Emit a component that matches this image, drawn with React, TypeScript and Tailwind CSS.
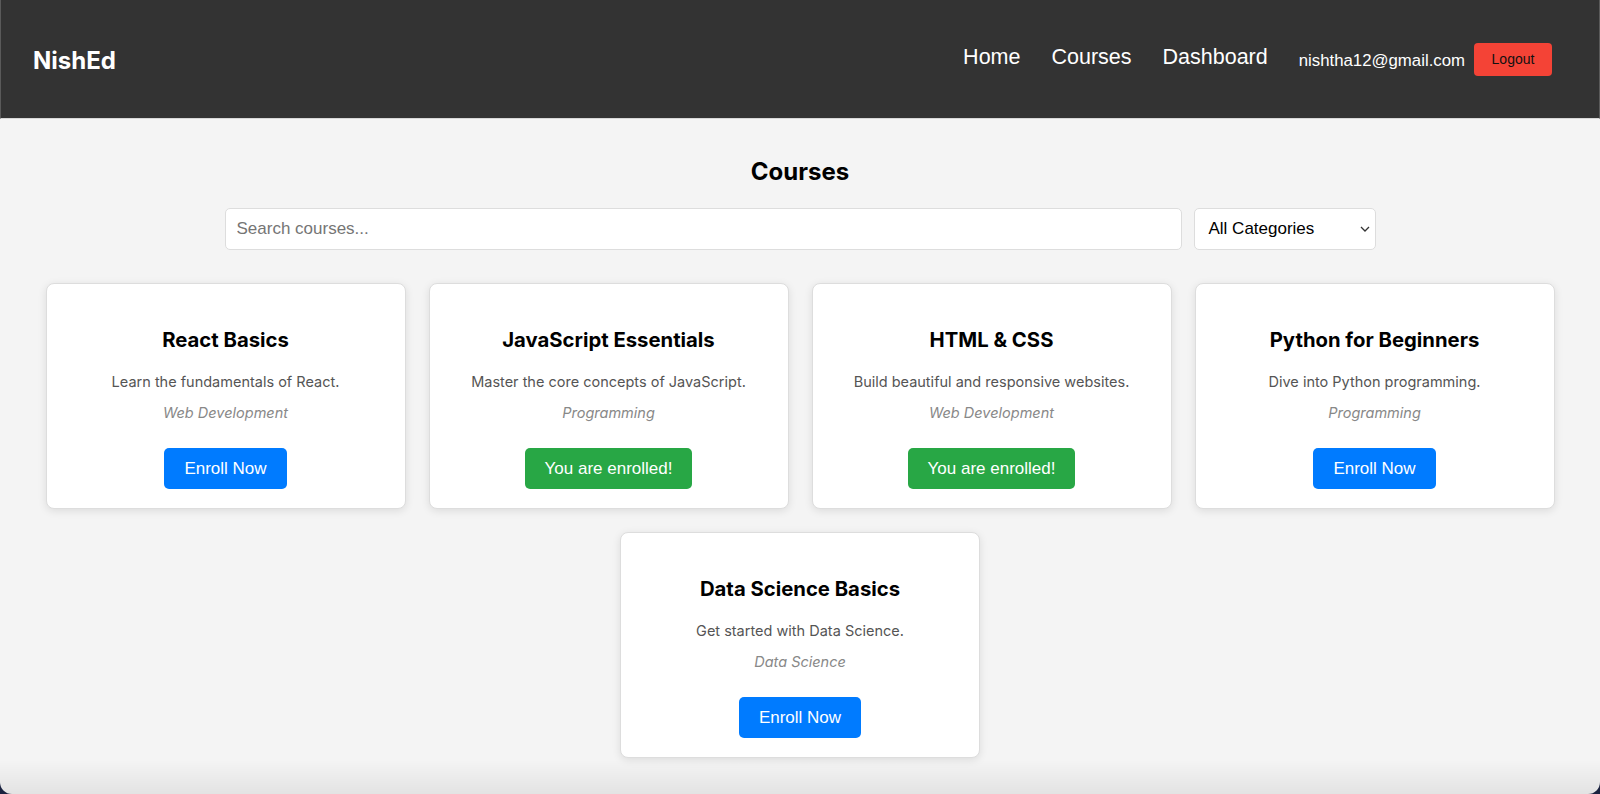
import React from "react";

const courses = [
  { title: "React Basics", desc: "Learn the fundamentals of React.", cat: "Web Development", enrolled: false },
  { title: "JavaScript Essentials", desc: "Master the core concepts of JavaScript.", cat: "Programming", enrolled: true },
  { title: "HTML & CSS", desc: "Build beautiful and responsive websites.", cat: "Web Development", enrolled: true },
  { title: "Python for Beginners", desc: "Dive into Python programming.", cat: "Programming", enrolled: false },
  { title: "Data Science Basics", desc: "Get started with Data Science.", cat: "Data Science", enrolled: false },
];

function Card({ c }: { c: (typeof courses)[number] }) {
  return (
    <div className="w-[360px] h-[226px] bg-white border border-[#dddddd] rounded-lg shadow-[0_2px_8px_rgba(0,0,0,0.1)] flex flex-col items-center pt-[44px] font-['Inter','Noto_Sans',sans-serif]">
      <h3 className="text-[20.3px] leading-[24px] font-bold text-black">{c.title}</h3>
      <p className="mt-[20px] text-[14.5px] leading-[20px] text-[#555555]">{c.desc}</p>
      <p className="mt-[11px] text-[14.5px] leading-[20px] italic text-[#888888]">{c.cat}</p>
      <button
        className={
          c.enrolled
            ? "mt-[25px] h-[41px] px-5 rounded-[5px] text-white text-[17px] bg-[#28a745] font-['Liberation_Sans',Arial,sans-serif]"
            : "mt-[25px] h-[41px] px-5 rounded-[5px] text-white text-[17px] bg-[#007bff] font-['Liberation_Sans',Arial,sans-serif]"
        }
      >
        {c.enrolled ? "You are enrolled!" : "Enroll Now"}
      </button>
    </div>
  );
}

export default function App() {
  return (
    <div className="w-[1600px] h-[794px] bg-[#1b2340] overflow-hidden">
      <div className="relative w-full h-full bg-[#f4f4f4] rounded-b-[12px] overflow-hidden flex flex-col">
        <header className="h-[119px] shrink-0 bg-[#333333] border-l border-r border-[#5a5a5a] border-b border-b-[#d8d8d8] flex items-center pl-[32px] pr-[47px]">
          <div className="pt-[4px] text-[24px] font-bold text-white font-['Inter','Noto_Sans',sans-serif]">NishEd</div>
          <div className="ml-auto flex items-center font-['Liberation_Sans',Arial,sans-serif]">
            <nav className="flex items-center gap-[31px] pb-[4px] text-white text-[21.5px]">
              <span>Home</span>
              <span>Courses</span>
              <span>Dashboard</span>
            </nav>
            <span className="ml-[31px] pt-[4px] text-white text-[16.8px]">nishtha12@gmail.com</span>
            <button className="ml-[9px] w-[78px] h-[33px] bg-[#f44336] rounded-[4px] text-[#111111] text-[14px] flex items-center justify-center">
              Logout
            </button>
          </div>
        </header>
        <main className="flex flex-col items-center">
          <h2 className="mt-[38px] text-[24px] leading-[30px] font-bold text-black font-['Inter','Noto_Sans',sans-serif]">Courses</h2>
          <div className="mt-[21px] flex gap-[12px] font-['Liberation_Sans',Arial,sans-serif]">
            <input
              className="w-[957px] h-[42px] bg-white border border-[#dddddd] rounded-[5px] px-[11px] text-[17px] placeholder:text-[#757575] outline-none"
              placeholder="Search courses..."
            />
            <div className="relative w-[182px] h-[42px] bg-white border border-[#dddddd] rounded-[5px] flex items-center pl-[14px] text-[17px] text-black">
              All Categories
              <svg className="absolute right-[5px] top-[17px]" width="10" height="6" viewBox="0 0 10 6" fill="none">
                <path d="M1 1l4 4 4-4" stroke="#333" strokeWidth="1.3" />
              </svg>
            </div>
          </div>
          <div className="mt-[33px] w-[1520px] flex flex-wrap justify-center gap-x-[23px] gap-y-[23px]">
            {courses.map((c) => (
              <Card key={c.title} c={c} />
            ))}
          </div>
        </main>
        <div className="absolute left-0 right-0 bottom-0 h-[34px] bg-gradient-to-b from-transparent to-[rgba(0,0,0,0.07)] pointer-events-none" />
      </div>
    </div>
  );
}
